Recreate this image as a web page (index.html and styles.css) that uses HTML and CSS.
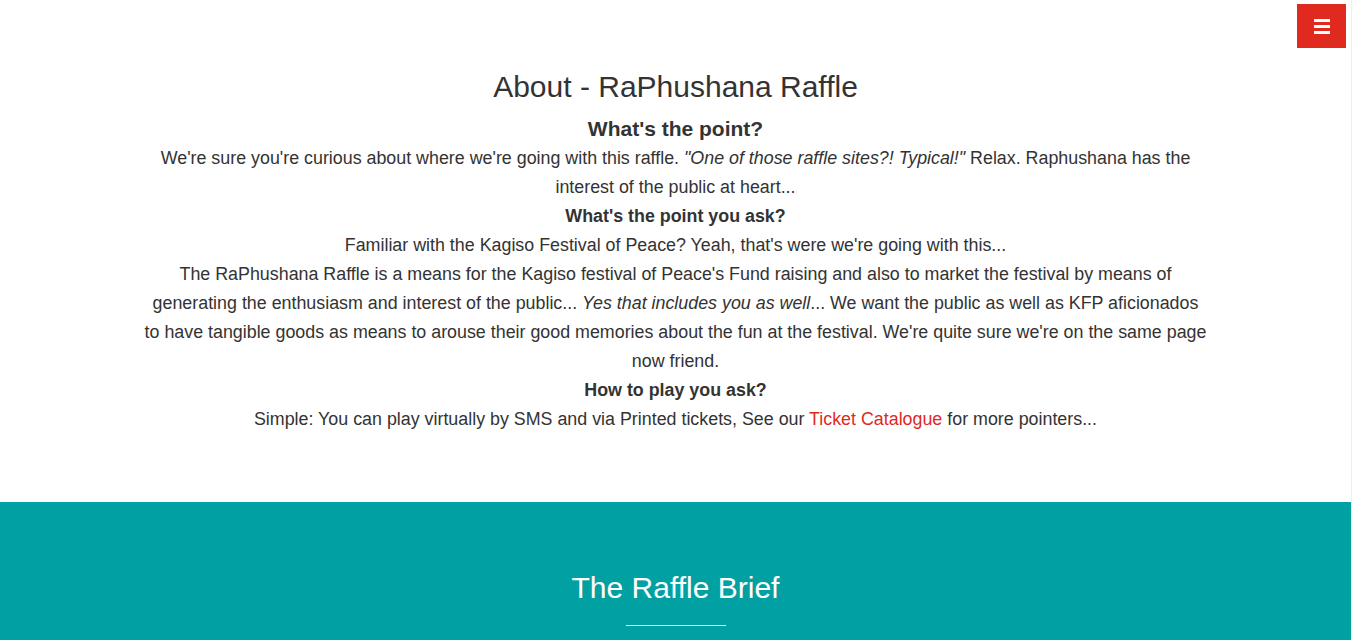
FILE: index.html
```html
<!DOCTYPE html>
<html>
<head>
<meta charset="utf-8">
<title>About - RaPhushana Raffle</title>
<link rel="stylesheet" href="styles.css">
</head>
<body>
<button class="menu-btn" aria-label="Menu">
  <span class="bar"></span><span class="bar"></span><span class="bar"></span>
</button>
<section class="about">
  <div class="container">
    <h1 class="title">About - RaPhushana Raffle</h1>
    <h3 class="lead-q">What's the point?</h3>
    <p>We're sure you're curious about where we're going with this raffle. <em>"One of those raffle sites?! Typical!"</em> Relax. Raphushana has the interest of the public at heart...</p>
    <h4 class="q">What's the point you ask?</h4>
    <p>Familiar with the Kagiso Festival of Peace? Yeah, that's were we're going with this...</p>
    <p>The RaPhushana Raffle is a means for the Kagiso festival of Peace's Fund raising and also to market the festival by means of generating the enthusiasm and interest of the public... <em>Yes that includes you as well</em>... We want the public as well as KFP aficionados to have tangible goods as means to arouse their good memories about the fun at the festival. We're quite sure we're on the same page now friend.</p>
    <h4 class="q">How to play you ask?</h4>
    <p>Simple: You can play virtually by SMS and via Printed tickets, See our <a href="#">Ticket Catalogue</a> for more pointers...</p>
  </div>
</section>
<section class="brief">
  <h2 class="brief-title">The Raffle Brief</h2>
  <hr class="brief-rule">
</section>
</body>
</html>
```

FILE: styles.css
```css
html, body {
  margin: 0;
  padding: 0;
}
body {
  font-family: "Liberation Sans", Arial, sans-serif;
  color: #333;
  background: #fff;
  width: 1351px;
  border-right: 1px solid #eee;
  overflow: hidden;
}
.menu-btn {
  position: fixed;
  top: 4px;
  right: 6px;
  width: 49px;
  height: 44px;
  background: #e0291f;
  border: none;
  padding: 0;
  display: flex;
  flex-direction: column;
  align-items: center;
  justify-content: center;
  gap: 3px;
}
.menu-btn .bar {
  display: block;
  width: 16px;
  height: 3px;
  background: #fff;
}
.about {
  padding: 67px 0 68px;
}
.container {
  width: 1064px;
  margin: 0 auto;
  text-align: center;
}
.title {
  font-size: 30px;
  font-weight: normal;
  line-height: 40px;
  margin: 0 0 7px;
}
.lead-q {
  font-size: 21px;
  font-weight: bold;
  line-height: 30px;
  margin: 0;
}
.q {
  font-size: 17.85px;
  font-weight: bold;
  line-height: 29px;
  margin: 0;
}
.about p {
  font-size: 17.85px;
  line-height: 29px;
  margin: 0;
}
.about a {
  color: #e0291f;
  text-decoration: none;
}
.brief {
  background: #01a1a3;
  padding: 66px 0 20px;
  text-align: center;
}
.brief-title {
  color: #fff;
  font-size: 30px;
  font-weight: normal;
  line-height: 40px;
  margin: 0;
}
.brief-rule {
  width: 100px;
  margin: 17px auto 0;
  border: none;
  border-top: 1px solid #e6f6f6;
}
```
